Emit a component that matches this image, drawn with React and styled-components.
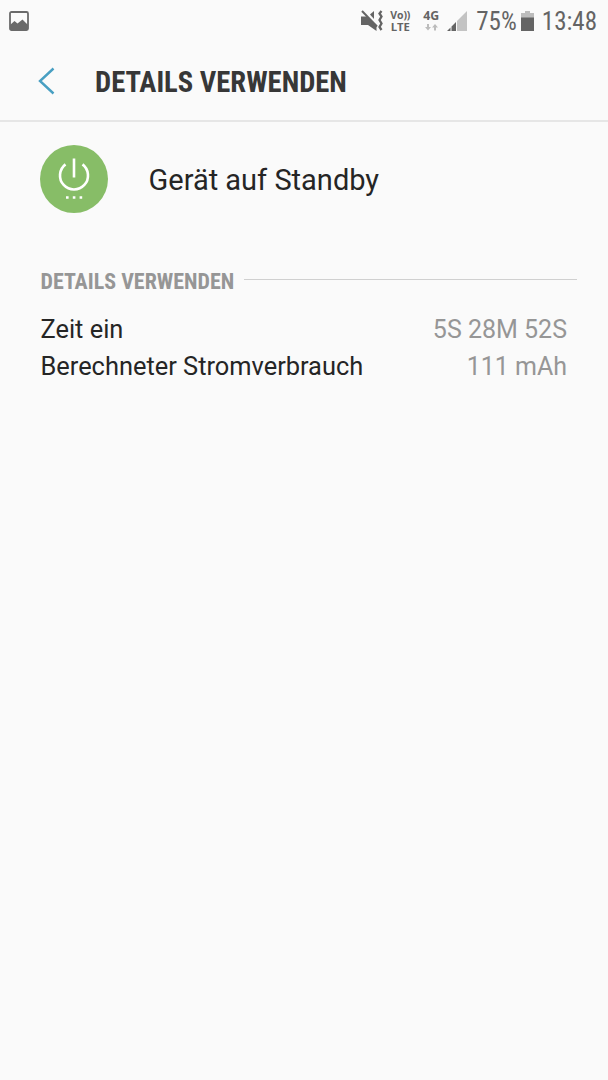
import React from "react";
import styled, { createGlobalStyle } from "styled-components";

const GlobalStyle = createGlobalStyle`
  * { box-sizing: border-box; }
  body { margin: 0; background: #fafafa; font-family: Roboto, sans-serif; }
`;

const Screen = styled.div`
  width: 608px;
  height: 1080px;
  overflow: hidden;
  background: #fafafa;
  color: #252525;
`;

const StatusBar = styled.div`
  height: 41px;
  display: flex;
  align-items: center;
  justify-content: space-between;
  padding: 0 11px 0 9px;
  color: #646464;
`;

const StatusGroup = styled.div`
  display: flex;
  align-items: center;
`;

const Condensed = styled.span`
  font-family: "Roboto Condensed", Roboto, sans-serif;
  font-stretch: 75%;
  white-space: nowrap;
`;

const StatusText = styled(Condensed)`
  font-size: 25px;
  line-height: 41px;
  margin: 2px ${(p) => p.$gap || 0}px 0 0;
`;

const Icon = styled.svg`
  display: block;
  flex: none;
  margin-right: ${(p) => p.$gap || 0}px;
`;

const NetworkLabel = styled.div`
  display: flex;
  flex-direction: column;
  align-items: center;
  width: ${(p) => p.$width}px;
  margin-right: ${(p) => p.$gap}px;
  font-family: "Open Sans", sans-serif;
  font-weight: 700;
  font-size: ${(p) => p.$size}px;
  line-height: 11px;
  white-space: nowrap;
`;

const VoiceLabel = styled.span`
  font-size: 10.5px;
  letter-spacing: -0.1px;
`;

const Header = styled.header`
  height: 81px;
  display: flex;
  align-items: center;
  padding-left: 38px;
  border-bottom: 2px solid #e6e6e6;
`;

const Title = styled(Condensed).attrs({ as: "h1" })`
  margin: 3px 0 0 40px;
  font-size: 28.6px;
  font-weight: 700;
  line-height: 36px;
  color: #373737;
`;

const AppRow = styled.section`
  height: 114px;
  display: flex;
  align-items: center;
  padding-left: 40px;
`;

const AppName = styled.span`
  font-size: 29px;
  line-height: 36px;
  margin: 2px 0 0 0.5px;
`;

const SectionHead = styled.div`
  display: flex;
  align-items: center;
  margin: 28px 31px 0 40.5px;
  height: 30px;
`;

const SectionTitle = styled(Condensed).attrs({ as: "h2" })`
  margin: 5px 10px 0 0;
  font-size: 22px;
  font-weight: 700;
  line-height: 28px;
  color: #969696;
`;

const Rule = styled.div`
  flex: 1;
  height: 1px;
  background: #d0d0d0;
`;

const Details = styled.dl`
  margin: 17px 41px 0 40.5px;
`;

const DetailRow = styled.div`
  display: flex;
  justify-content: space-between;
  font-size: 25px;
  line-height: 37px;
`;

const Label = styled.dt`
  font-size: 25.4px;
`;

const Value = styled.dd`
  margin: 0;
  color: #969696;
`;

export default function App() {
  return (
    <>
      <GlobalStyle />
      <Screen>
        <StatusBar>
          <Icon width="20" height="20" viewBox="0 0 20 20">
            <rect x="1" y="1" width="18" height="18" rx="1.5" fill="none" stroke="#6a6a6a" strokeWidth="1.8" />
            <path d="M1 14 L5.5 10 L8.5 12.5 L13.5 8.5 L19 14 V19 H1 Z" fill="#6a6a6a" />
          </Icon>
          <StatusGroup>
            <Icon width="22" height="22" viewBox="0 0 22 22" $gap={7}>
              <path d="M0 6.5 H6 L15.5 15 V21 L7 15 H0 Z" fill="#646464" />
              <path d="M9 4.5 L13 1 V9 Z" fill="#646464" />
              <path d="M1 1 L16 16.5" stroke="#646464" strokeWidth="2" />
              <path d="M20.5 1 L18.5 3.5 L20.5 6.5 L18.5 10 L20.5 13.5 L18.5 17 L20.5 20" fill="none" stroke="#646464" strokeWidth="2.3" />
            </Icon>
            <NetworkLabel $width={20} $gap={13} $size={11.3}>
              <VoiceLabel>Vo))</VoiceLabel>
              <span>LTE</span>
            </NetworkLabel>
            <NetworkLabel $width={16} $gap={8} $size={12.3}>
              <span>4G</span>
              <Icon width="13" height="10" viewBox="0 0 13 10">
                <path d="M2 3 H4 V6 H6 L3 9.5 L0 6 H2 Z M9 9.5 H11 V6.5 H13 L10 3 L7 6.5 H9 Z" fill="#bcbcbc" />
              </Icon>
            </NetworkLabel>
            <Icon width="20" height="20" viewBox="0 0 20 20" $gap={9}>
              <path d="M10 20 V10 L20 0 V20 Z" fill="#c3c3c3" />
              <path d="M0 20 L3.5 16.5 V20 Z M4.5 20 V15.5 L9 11 V20 Z" fill="#646464" />
            </Icon>
            <StatusText $gap={4}>75%</StatusText>
            <Icon width="13" height="20" viewBox="0 0 13 20" $gap={8}>
              <path d="M4 0 H9 V2 H13 V7 H0 V2 H4 Z" fill="#bcbcbc" />
              <path d="M0 6.5 H13 V20 H0 Z" fill="#646464" />
            </Icon>
            <StatusText>13:48</StatusText>
          </StatusGroup>
        </StatusBar>
        <Header>
          <Icon width="17" height="28" viewBox="0 0 17 28">
            <path d="M15.5 1.5 L2 14 L15.5 26.5" fill="none" stroke="#489fc2" strokeWidth="2.4" />
          </Icon>
          <Title>DETAILS VERWENDEN</Title>
        </Header>
        <AppRow>
          <Icon width="68" height="68" viewBox="0 0 68 68" $gap={40}>
            <circle cx="34" cy="34" r="34" fill="#87bd67" />
            <path d="M25.5 19.4 A14 14 0 1 0 42.5 19.4 M34 13.5 V32.5" fill="none" stroke="#fff" strokeWidth="2.6" />
            <path d="M26 52.5 H28.6 M32.8 52.5 H35.4 M39.6 52.5 H42.2" stroke="#fff" strokeWidth="2.6" />
          </Icon>
          <AppName>Gerät auf Standby</AppName>
        </AppRow>
        <SectionHead>
          <SectionTitle>DETAILS VERWENDEN</SectionTitle>
          <Rule />
        </SectionHead>
        <Details>
          <DetailRow>
            <Label>Zeit ein</Label>
            <Value>5S 28M 52S</Value>
          </DetailRow>
          <DetailRow>
            <Label>Berechneter Stromverbrauch</Label>
            <Value>111 mAh</Value>
          </DetailRow>
        </Details>
      </Screen>
    </>
  );
}
